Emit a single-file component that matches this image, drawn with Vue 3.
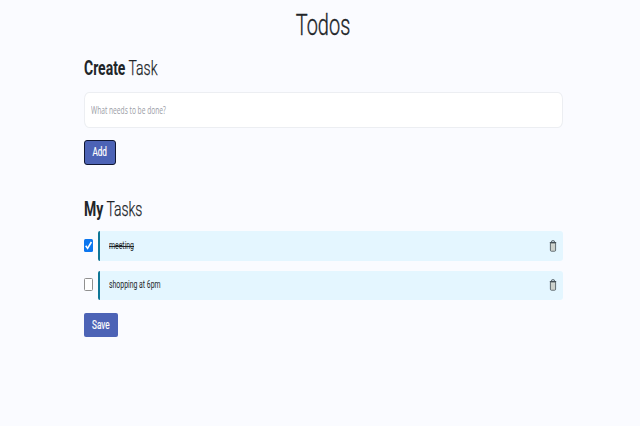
<script setup>
import { ref } from 'vue'

const draft = ref('')
const tasks = ref([
  { id: 1, title: 'meeting', done: true },
  { id: 2, title: 'shopping at 6pm', done: false },
])

function addTask() {
  const title = draft.value.trim()
  if (!title) return
  tasks.value.push({ id: Date.now(), title, done: false })
  draft.value = ''
}

function removeTask(id) {
  tasks.value = tasks.value.filter((t) => t.id !== id)
}
</script>

<template>
  <main class="page">
    <h1><span class="narrow center">Todos</span></h1>
    <section class="content">
      <h2><span class="narrow"><b>Create</b> Task</span></h2>
      <div class="field">
        <input v-model="draft" class="narrow" placeholder="What needs to be done?" />
      </div>
      <button class="btn add" @click="addTask"><span class="narrow center">Add</span></button>
      <h2 class="mine"><span class="narrow"><b>My</b> Tasks</span></h2>
      <ul>
        <li v-for="task in tasks" :key="task.id">
          <label class="check" :class="{ on: task.done }">
            <input v-model="task.done" type="checkbox" />
            <svg v-if="task.done" viewBox="0 0 9 13"><path d="M1.7 6.8 3.6 9.4 7.4 3" /></svg>
          </label>
          <div class="card">
            <span class="narrow title" :class="{ done: task.done }">{{ task.title }}</span>
            <svg class="trash" viewBox="0 0 8 12" @click="removeTask(task.id)">
              <path class="can" d="M1.4 3v7.2q0 1 .9 1h3.4q.9 0 .9-1V3z" />
              <path class="ribs" d="M3 4.5v5.5M5 4.5v5.5" />
              <path class="lid" d="M.8 2.5h6.4M2.6 2V1.3q0-.5.5-.5h1.8q.5 0 .5.5V2" />
            </svg>
          </div>
        </li>
      </ul>
      <button class="btn save"><span class="narrow center">Save</span></button>
    </section>
  </main>
</template>

<style>
body {
  margin: 0;
  background: #fafbff;
}
</style>

<style scoped>
.page {
  min-height: 426px;
  box-sizing: border-box;
  padding-top: 6px;
  font-family: Roboto, "Liberation Sans", sans-serif;
  color: #212529;
}
.narrow {
  display: inline-block;
  transform: scaleX(0.665);
  transform-origin: left center;
  white-space: nowrap;
}
.center {
  transform-origin: center;
}
h1 {
  margin: 0;
  padding-left: 6px;
  height: 38px;
  line-height: 38px;
  font-size: 30px;
  font-weight: 300;
  text-align: center;
  -webkit-text-stroke: 0.35px #212529;
}
.content {
  width: 479px;
  margin-left: 84px;
}
h2 {
  margin: 11px 0 0;
  height: 26px;
  line-height: 26px;
  font-size: 21px;
  font-weight: 300;
  -webkit-text-stroke: 0.25px #212529;
}
h2 b {
  font-weight: 700;
  -webkit-text-stroke: 0;
}
.field {
  box-sizing: border-box;
  height: 36px;
  margin-top: 11px;
  padding-left: 6px;
  border: 1px solid #eceef2;
  border-radius: 5px / 7px;
  background: #fff;
  overflow: hidden;
}
.field input {
  width: 660px;
  height: 34px;
  padding: 0;
  border: 0;
  outline: 0;
  background: transparent;
  font: 10px "Open Sans", "Noto Sans", sans-serif;
}
.field input::placeholder {
  color: #9a9ca5;
}
.btn {
  display: flex;
  align-items: center;
  justify-content: center;
  box-sizing: border-box;
  padding: 0;
  border: 0;
  border-radius: 2px;
  background: #4c63b6;
  color: #fff;
  font: 400 12px Roboto, sans-serif;
}
.btn .narrow {
  transform: scaleX(0.68);
  -webkit-text-stroke: 0.2px #fff;
}
.add {
  width: 32px;
  height: 25px;
  margin-top: 12px;
  padding-bottom: 1px;
  border: 1px solid #101733;
  border-radius: 3px;
}
.save {
  width: 34px;
  height: 24px;
  margin-top: 13px;
}
.mine {
  margin-top: 31px;
}
ul {
  display: flex;
  flex-direction: column;
  gap: 10px;
  margin: 9px 0 0;
  padding: 0;
  list-style: none;
}
li {
  display: flex;
  align-items: center;
  gap: 5px;
  height: 29.5px;
}
.check {
  box-sizing: border-box;
  width: 9px;
  height: 13px;
  margin-bottom: 1px;
  flex: none;
  border: 1px solid #909090;
  border-radius: 1.5px;
  background: #fff;
}
.check input {
  display: none;
}
.check.on {
  border: 0;
  margin-bottom: 0;
  background: #0b76ef;
}
.check svg {
  display: block;
  width: 9px;
  height: 13px;
  fill: none;
  stroke: #fff;
  stroke-width: 1.6;
}
.card {
  display: flex;
  align-items: center;
  justify-content: space-between;
  box-sizing: border-box;
  flex: 1;
  height: 100%;
  padding: 0 6px 0 8.5px;
  border-left: 2px solid #107797;
  border-radius: 2px 3px 3px 2px;
  background: #e4f6ff;
}
.title {
  margin-bottom: 1px;
  font-size: 10px;
  transform: scaleX(0.69);
}
.done {
  margin-bottom: 0;
  text-decoration: line-through;
}
.trash {
  width: 8px;
  height: 12px;
  fill: none;
  stroke: #39444b;
  stroke-width: 0.9;
}
.can {
  fill: #d8dcd6;
  stroke: #505b61;
}
.ribs {
  stroke: #b2b8b6;
  stroke-width: 0.6;
}
</style>
